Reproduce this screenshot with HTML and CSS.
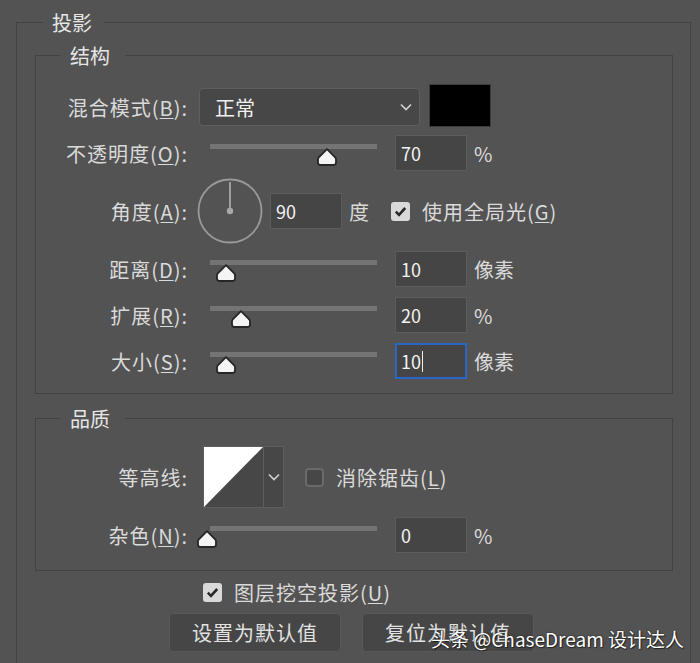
FILE: index.html
```html
<!DOCTYPE html>
<html lang="zh-CN">
<head>
    <meta charset="UTF-8">
    <meta name="viewport" content="width=device-width, initial-scale=1.0">
    <title>投影</title>
    <link rel="stylesheet" href="styles.css">
</head>
<body>
    <svg class="defs" width="0" height="0">
        <symbol id="thumb" viewBox="0 0 20 18">
            <path d="M10 1.2 L18.2 9.4 Q19 10.2 19 11.6 L19 14.6 Q19 17 16.6 17 L3.4 17 Q1 17 1 14.6 L1 11.6 Q1 10.2 1.8 9.4 Z" fill="#f4f4f4" stroke="#262626" stroke-width="1.8" stroke-linejoin="round"/>
        </symbol>
        <symbol id="chev" viewBox="0 0 12 8">
            <polyline points="1,1.5 6,6.5 11,1.5" fill="none" stroke="#d0d0d0" stroke-width="1.7"/>
        </symbol>
        <symbol id="tick" viewBox="0 0 19 19">
            <path d="M4.8 9.6 L8 12.8 L14.2 6" fill="none" stroke="#2a2a2a" stroke-width="2.6"/>
        </symbol>
    </svg>

    <fieldset class="group outer">
        <legend>投影</legend>

        <fieldset class="group">
            <legend>结构</legend>

            <div class="row">
                <span class="lbl">混合模式(<u>B</u>):</span>
                <div class="select">
                    <span>正常</span>
                    <svg class="chev"><use href="#chev"/></svg>
                </div>
                <div class="swatch"></div>
            </div>

            <div class="row">
                <span class="lbl">不透明度(<u>O</u>):</span>
                <div class="slider">
                    <div class="track"></div>
                    <div class="travel"><svg class="thumb" style="left: 70%"><use href="#thumb"/></svg></div>
                </div>
                <div class="field">70</div>
                <span class="unit">%</span>
            </div>

            <div class="row tall">
                <span class="lbl">角度(<u>A</u>):</span>
                <svg class="dial" viewBox="0 0 66 66">
                    <circle cx="33" cy="33" r="31.5" fill="none" stroke="#9a9a9a" stroke-width="1.8"/>
                    <line x1="33" y1="33" x2="33" y2="4" stroke="#a8a8a8" stroke-width="1.8"/>
                    <circle cx="33" cy="33" r="3.2" fill="#a8a8a8"/>
                </svg>
                <div class="field angle">90</div>
                <span class="unit">度</span>
                <span class="check on angle-check"><svg><use href="#tick"/></svg></span>
                <span class="txt">使用全局光(<u>G</u>)</span>
            </div>

            <div class="row">
                <span class="lbl">距离(<u>D</u>):</span>
                <div class="slider">
                    <div class="track"></div>
                    <div class="travel"><svg class="thumb" style="left: 11%"><use href="#thumb"/></svg></div>
                </div>
                <div class="field">10</div>
                <span class="unit">像素</span>
            </div>

            <div class="row">
                <span class="lbl">扩展(<u>R</u>):</span>
                <div class="slider">
                    <div class="track"></div>
                    <div class="travel"><svg class="thumb" style="left: 20%"><use href="#thumb"/></svg></div>
                </div>
                <div class="field">20</div>
                <span class="unit">%</span>
            </div>

            <div class="row">
                <span class="lbl">大小(<u>S</u>):</span>
                <div class="slider">
                    <div class="track"></div>
                    <div class="travel"><svg class="thumb" style="left: 11%"><use href="#thumb"/></svg></div>
                </div>
                <div class="field focus">10<span class="caret"></span></div>
                <span class="unit">像素</span>
            </div>
        </fieldset>

        <fieldset class="group quality">
            <legend>品质</legend>

            <div class="row tall">
                <span class="lbl">等高线:</span>
                <div class="contour">
                    <svg class="curve" viewBox="0 0 59 60" preserveAspectRatio="none">
                        <rect width="59" height="60" fill="#474747"/>
                        <polygon points="0,0 59,0 0,60" fill="#ffffff"/>
                    </svg>
                    <div class="drop"><svg class="chev"><use href="#chev"/></svg></div>
                </div>
                <span class="check off"></span>
                <span class="txt">消除锯齿(<u>L</u>)</span>
            </div>

            <div class="row">
                <span class="lbl">杂色(<u>N</u>):</span>
                <div class="slider">
                    <div class="track"></div>
                    <div class="travel"><svg class="thumb" style="left: 0%"><use href="#thumb"/></svg></div>
                </div>
                <div class="field">0</div>
                <span class="unit">%</span>
            </div>
        </fieldset>

        <div class="opt">
            <span class="check on"><svg><use href="#tick"/></svg></span>
            <span class="txt">图层挖空投影(<u>U</u>)</span>
        </div>

        <div class="actions">
            <button class="btn">设置为默认值</button>
            <button class="btn">复位为默认值</button>
        </div>
    </fieldset>

    <div class="mark">头条 @ChaseDream 设计达人</div>
</body>
</html>
```

FILE: styles.css
```css
*{
    box-sizing: border-box;
}
body{
    margin: 0;
    height: 663px;
    overflow: hidden;
    position: relative;
    background-color: #535353;
    color: #dadada;
    font-family: "Noto Sans CJK SC", "Noto Sans", sans-serif;
    font-size: 20px;
}
.defs{
    position: absolute;
}
u{
    text-underline-offset: 2px;
    text-decoration-thickness: 1px;
}

/* group boxes */
.group{
    margin: 0;
    padding: 15px 0 9px 0;
    border: 1px solid #424242;
    min-width: 0;
}
.group legend{
    margin-left: 24px;
    padding: 0 15px 0 10px;
    line-height: 27px;
    color: #e6e6e6;
}
.outer{
    width: 675px;
    margin: 9px 0 0 16px;
    padding: 6px 17px 40px 18px;
}
.outer > legend{
    margin-left: 8px;
    padding: 0 12px 0 9px;
}
.quality{
    margin-top: 11px;
    padding: 10px 0 12px 0;
}

/* rows */
.row{
    display: flex;
    align-items: center;
    height: 46px;
    white-space: nowrap;
}
.row.tall{
    height: 70px;
}
.lbl{
    flex: none;
    width: 152px;
    text-align: right;
    letter-spacing: 1px;
}
.txt{
    letter-spacing: 1px;
}

.select{
    flex: none;
    margin-left: 11px;
    width: 221px;
    height: 38px;
    display: flex;
    align-items: center;
    justify-content: space-between;
    padding: 0 7px 0 15px;
    background-color: #474747;
    border: 1px solid #5e5e5e;
    border-radius: 4px;
    color: #f0f0f0;
}
.chev{
    width: 12px;
    height: 8px;
}
.swatch{
    flex: none;
    align-self: flex-start;
    margin-left: 9px;
    width: 62px;
    height: 43px;
    background-color: #000;
    border: 1px solid #3c3c3c;
}

/* sliders */
.slider{
    flex: none;
    position: relative;
    margin-left: 11px;
    width: 186px;
    height: 26px;
}
.track{
    margin: 4px 0 0 11px;
    width: 167px;
    height: 5px;
    background-color: #747474;
}
.travel{
    position: absolute;
    left: 8px;
    top: 8px;
    width: 171px;
    height: 18px;
}
.thumb{
    position: absolute;
    top: 0;
    width: 20px;
    height: 18px;
    margin-left: -10px;
}

.field{
    flex: none;
    margin-left: 10px;
    width: 72px;
    height: 36px;
    display: flex;
    align-items: center;
    padding-left: 5px;
    background-color: #454545;
    border: 1px solid #5c5c5c;
    color: #f2f2f2;
    font-size: 18px;
}
.field.focus{
    border: 2px solid #2a66c6;
    padding-left: 4px;
}
.caret{
    display: inline-block;
    width: 1px;
    height: 21px;
    margin-left: 1px;
    background-color: #eee;
}
.unit{
    margin-left: 7px;
}

/* angle */
.dial{
    flex: none;
    margin-left: 9px;
    width: 66px;
    height: 66px;
}
.field.angle{
    margin-left: 7px;
}
.angle-check{
    margin-left: 22px;
}

/* checkboxes */
.check{
    flex: none;
    width: 19px;
    height: 19px;
    margin-right: 12px;
    border-radius: 3px;
    display: flex;
}
.check svg{
    width: 19px;
    height: 19px;
}
.check.on{
    background-color: #d9d9d9;
}
.check.off{
    margin-left: 21px;
    background-color: #474747;
    border: 2px solid #6a6a6a;
    border-radius: 4px;
}

/* contour */
.contour{
    flex: none;
    margin-left: 15px;
    height: 62px;
    display: flex;
    border: 1px solid #5e5e5e;
}
.curve{
    width: 59px;
    height: 60px;
}
.drop{
    width: 20px;
    display: flex;
    align-items: center;
    justify-content: center;
    background-color: #474747;
    border-left: 1px solid #5e5e5e;
}

/* bottom */
.opt{
    display: flex;
    align-items: center;
    height: 30px;
    margin-top: 6px;
    padding-left: 168px;
}
.actions{
    display: flex;
    gap: 21px;
    margin-top: 6px;
    padding-left: 134px;
}
.btn{
    width: 172px;
    height: 39px;
    background-color: #464646;
    border: 1px solid #585858;
    border-radius: 4px;
    color: #e2e2e2;
    font-family: inherit;
    font-size: 20px;
    letter-spacing: 1px;
}

.mark{
    position: absolute;
    left: 431px;
    top: 625px;
    font-size: 19px;
    color: #fff;
    white-space: nowrap;
    text-shadow: 0 0 2px rgba(0,0,0,0.7), 1px 1px 1px rgba(0,0,0,0.5);
}
```
